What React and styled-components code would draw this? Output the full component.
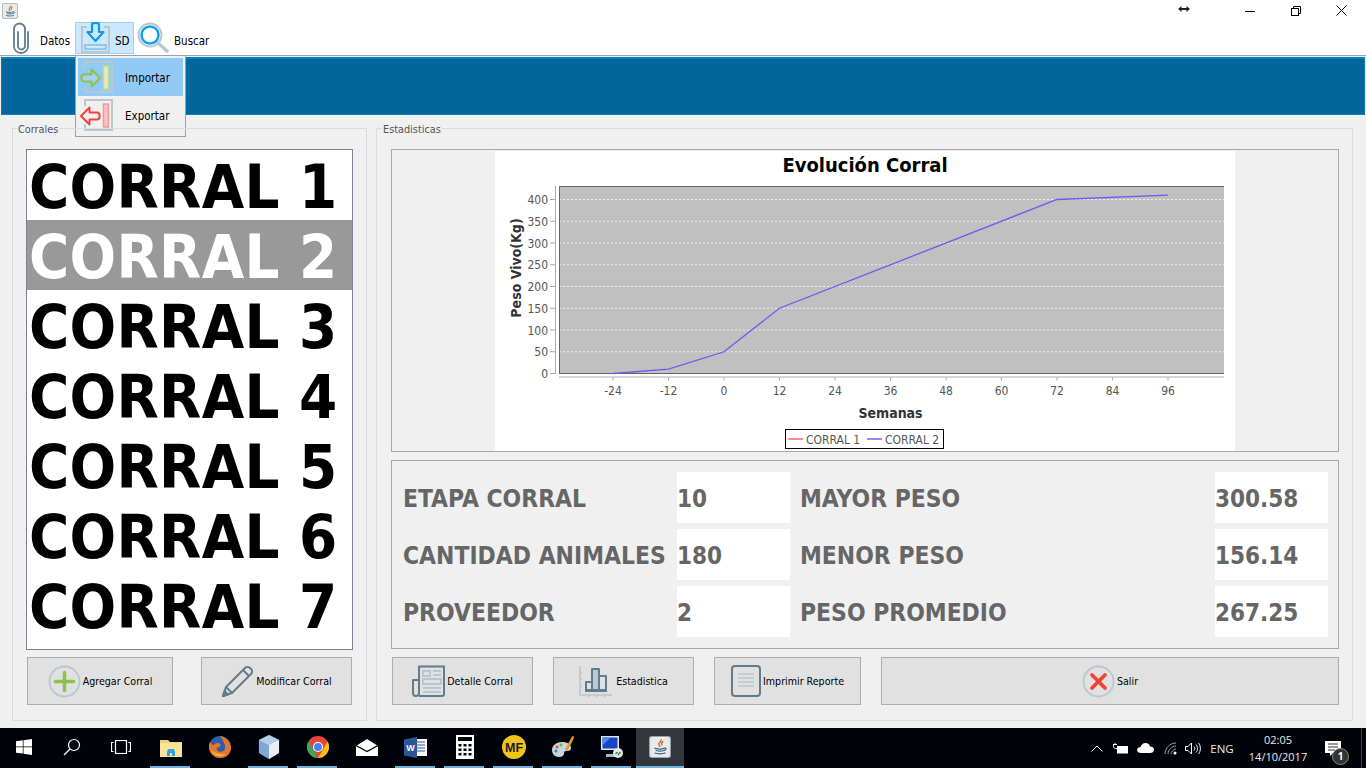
import React from 'react';
import styled, { createGlobalStyle } from 'styled-components';

const GlobalStyle = createGlobalStyle`
  html, body { margin: 0; padding: 0; overflow: hidden; }
  body { font-family: "DejaVu Sans Condensed", "DejaVu Sans", sans-serif; background: #f0f0f0; }
`;

const UI_FONT = '"DejaVu Sans Condensed", "DejaVu Sans", sans-serif';

const Page = styled.div`
  width: 1366px;
  height: 768px;
  display: flex;
  flex-direction: column;
  position: relative;
  overflow: hidden;
`;

const TitleBar = styled.div`
  height: 22px;
  background: #fff;
  display: flex;
  justify-content: space-between;
  padding: 0 2px;
  position: relative;
`;

const AppIcon = styled.div`
  padding-top: 3px;
`;

const WindowControls = styled.div`
  display: flex;
`;

const WindowButton = styled.div`
  width: 45.5px;
  height: 21px;
  display: flex;
  align-items: center;
  justify-content: center;
`;

const ResizeCursor = styled.svg`
  position: absolute;
  left: 1178px;
  top: 5px;
`;

const Toolbar = styled.div`
  height: 33px;
  background: #fff;
  border-bottom: 1px solid #a0a0a0;
  display: flex;
  align-items: stretch;
  padding-left: 9px;
  font-size: 11.5px;
  color: #000;
`;

const ToolItem = styled.div`
  display: flex;
  align-items: center;
  height: 32px;
  box-sizing: border-box;
  width: ${p => p.$w}px;
  margin-right: ${p => p.$mr || 0}px;
  gap: ${p => p.$gap || 0}px;
  padding-left: ${p => p.$pl || 0}px;
  border: 1px solid ${p => (p.$active ? '#99d1ff' : 'transparent')};
  background: ${p => (p.$active ? '#cce8ff' : 'transparent')};
`;

const ToolLabel = styled.span`
  margin-top: 6px;
`;

const Banner = styled.div`
  height: 59px;
  margin: 1px 1px 0;
  background: #00669c;
  border: 1px solid #0080bd;
  border-top-width: 2px;
  box-sizing: border-box;
`;

const Menu = styled.div`
  position: absolute;
  left: 75px;
  top: 55px;
  width: 111px;
  height: 82px;
  box-sizing: border-box;
  background: #f0f0f0;
  border: 1px solid #a0a0a0;
  padding: 2px;
  font-size: 11.5px;
  color: #000;
`;

const MenuRow = styled.div`
  height: 38px;
  display: flex;
  align-items: center;
  background: ${p => (p.$active ? '#91c9f7' : 'transparent')};
`;

const MenuIcon = styled.div`
  width: 47px;
  height: 100%;
  display: flex;
  align-items: center;
  padding-left: 1px;
  box-sizing: border-box;
`;

const MenuLabel = styled.span`
  margin-top: 2px;
`;

const Main = styled.div`
  flex: 1;
  background: #f0f0f0;
  display: flex;
  gap: 9px;
  padding: 13px 13px 7px 12px;
`;

const Group = styled.div`
  position: relative;
  box-sizing: border-box;
  width: ${p => p.$w}px;
  border: 1px solid #dcdcdc;
  padding: 20px 13px 15px ${p => p.$pl}px;
  display: flex;
  flex-direction: column;
  gap: ${p => p.$gap}px;
`;

const Legend = styled.span`
  position: absolute;
  top: -6px;
  left: ${p => p.$x}px;
  padding: 0 1px;
  background: #f0f0f0;
  font-size: 10.8px;
  line-height: 13px;
  color: #555;
`;

const CorralList = styled.div`
  height: 501px;
  box-sizing: border-box;
  background: #fff;
  border: 1px solid #7a8290;
  display: flex;
  flex-direction: column;
`;

const CorralItem = styled.div`
  height: 70px;
  flex: none;
  box-sizing: border-box;
  padding: 4px 0 0 2px;
  display: flex;
  align-items: center;
  font-size: 61px;
  font-weight: 700;
  letter-spacing: 0.3px;
  line-height: 66px;
  white-space: pre;
  color: ${p => (p.$selected ? '#fff' : '#000')};
  background: ${p => (p.$selected ? '#999' : 'transparent')};
`;

const ButtonRow = styled.div`
  display: flex;
  height: 48px;
  margin-left: ${p => p.$ml || 0}px;
  gap: ${p => p.$gap}px;
`;

const ActionButton = styled.div`
  box-sizing: border-box;
  width: ${p => (p.$w ? `${p.$w}px` : 'auto')};
  flex: ${p => (p.$grow ? 1 : 'none')};
  height: 48px;
  background: #e1e1e1;
  border: 1px solid #adadad;
  display: flex;
  align-items: center;
  justify-content: center;
  gap: ${p => p.$gap ?? 2}px;
  font-size: 10.6px;
  color: #000;
`;

const ChartPanel = styled.div`
  height: 303px;
  box-sizing: border-box;
  border: 1px solid #a8a8a8;
  display: flex;
  justify-content: center;
  align-items: center;
`;

const StatsPanel = styled.div`
  height: 189px;
  box-sizing: border-box;
  border: 1px solid #a8a8a8;
  padding: 11px 10px 11px 11px;
  display: grid;
  grid-template-columns: 274px 113px 425px 113px;
  grid-auto-rows: 51px;
  row-gap: 6px;
  font-size: 24.4px;
  font-weight: 700;
  color: #666;
`;

const StatLabel = styled.div`
  display: flex;
  align-items: center;
  white-space: nowrap;
  padding: 2px 0 0 ${p => p.$pl || 0}px;
`;

const StatValue = styled.div`
  background: #fff;
  display: flex;
  align-items: center;
  padding-top: 2px;
  font-size: 24px;
`;

const Taskbar = styled.div`
  height: 40px;
  background: #01030a;
  display: flex;
  align-items: center;
  color: #fff;
  font-family: "Open Sans", sans-serif;
`;

const TaskSlot = styled.div`
  width: ${p => p.$w || 49}px;
  height: 40px;
  flex: none;
  box-sizing: border-box;
  display: flex;
  align-items: center;
  justify-content: center;
  background: ${p => (p.$active ? '#33363a' : 'transparent')};
  border-bottom: 2px solid transparent;
  position: relative;
  &::after {
    content: '';
    display: ${p => (p.$running ? 'block' : 'none')};
    position: absolute;
    left: ${p => (p.$active ? 0 : 4)}px;
    right: ${p => (p.$active ? 0 : 5)}px;
    bottom: -2px;
    height: 2px;
    background: #6cb1e0;
  }
`;

const Tray = styled.div`
  margin-left: auto;
  display: flex;
  align-items: center;
  height: 40px;
`;

const TrayIcon = styled.div`
  width: ${p => p.$w}px;
  display: flex;
  justify-content: center;
  align-items: center;
`;

const Clock = styled.div`
  width: 72px;
  text-align: center;
  font-size: 11px;
  line-height: 17px;
  margin-left: 3px;
  color: #e8e8e8;
`;

const Lang = styled.div`
  font-size: 11.5px;
  width: 34px;
  text-align: center;
  color: #e8e8e8;
`;

const NotifyWrap = styled.div`
  width: 38px;
  height: 40px;
  margin-right: 9px;
  display: flex;
  align-items: center;
  justify-content: center;
  position: relative;
`;

const NotifyBadge = styled.span`
  position: absolute;
  left: 18px;
  top: 20px;
  width: 15px;
  height: 15px;
  border-radius: 50%;
  background: #333;
  border: 1px solid #888;
  font-size: 10px;
  font-weight: 700;
  line-height: 15px;
  text-align: center;
  color: #fff;
`;

const ShowDesktop = styled.div`
  width: 4px;
  height: 40px;
  border-left: 1px solid #3a3d42;
`;

/* ---- icons ---- */
const STEEL = '#5f7d8c';
const PALE = '#b8c8d0';

const JavaLogo = ({ size = 16 }) => (
  <svg width={size} height={size} viewBox="0 0 20 20">
    <rect x="0.5" y="0.5" width="19" height="19" rx="2" fill="#e8eaec" stroke="#9aa4ad" />
    <path d="M11 3c1 2-3 3-2 5 .4.8 1 1.300 1 2M13 5c-2 1-2 2-1 3.500" fill="none" stroke="#e2661a" strokeWidth="1.300" />
    <path d="M5 11c3 1 7 1 9 0M6 13c2 .8 6 .8 8 0M5 15.500c3 1 8 1 10-.2M14 11c2-.5 2 1.500 0 2" fill="none" stroke="#35648c" strokeWidth="1.100" />
  </svg>
);

const PaperClip = () => (
  <svg width="20" height="32" viewBox="1 0 20 32" fill="none" stroke={STEEL} strokeWidth="1.800" strokeLinecap="round">
    <path d="M8 10V24a3.500 3.500 0 0 0 7 0V7a5.500 5.500 0 0 0-11 0v17.500a7 6.500 0 0 0 14 0V10" />
  </svg>
);

const SdIcon = () => (
  <svg width="32" height="32" viewBox="0 0 32 32" fill="none">
    <path d="M8 5H3v25h27V5h-5" stroke={PALE} strokeWidth="2" />
    <rect x="6" y="23" width="21" height="4" fill="#cce8ff" stroke="#7fbde8" strokeWidth="1.500" />
    <path d="M13 2.500c0-2 7-2 7 0V10h4.500L16.500 19 8.500 10H13z" fill="#cce8ff" stroke="#0d9be8" strokeWidth="2.200" strokeLinejoin="round" />
  </svg>
);

const SearchIcon = () => (
  <svg width="32" height="32" viewBox="0 0 32 32" fill="none">
    <path d="M21 21l9 8" stroke={PALE} strokeWidth="3.500" strokeLinecap="round" />
    <circle cx="13" cy="13" r="11.500" stroke={PALE} strokeWidth="2" />
    <circle cx="13" cy="13" r="8.500" stroke="#10a0ee" strokeWidth="2.500" />
  </svg>
);

const TransferIcon = ({ out }) => (
  <svg width="36" height="34" viewBox="0 0 36 34" fill="none">
    <path d="M6 8V2h27v30H6v-6" stroke={PALE} strokeWidth="2" />
    <rect x="24.500" y="6" width="5" height="23" fill={out ? '#f7c4c4' : '#e3ecb8'} stroke={out ? '#ee9a9a' : '#c8da8e'} strokeWidth="1.500" />
    {out ? (
      <path d="M2 18l8.500-8.500v5H18c3.500 0 3.500 7 0 7h-7.500v5z" fill="#f0f0f0" stroke="#f44336" strokeWidth="2" strokeLinejoin="round" />
    ) : (
      <path d="M21 18l-8.500-8.500v5H5c-3.500 0-3.500 7 0 7h7.500v5z" fill="#a9d0f0" stroke="#8bc34a" strokeWidth="2" strokeLinejoin="round" />
    )}
  </svg>
);

const PlusIcon = () => (
  <svg width="33" height="33" viewBox="0 0 33 33" fill="none">
    <circle cx="16.500" cy="16.500" r="15" stroke="#b8c8d0" strokeWidth="1.800" />
    <path d="M16.500 7.500v18M7.500 16.500h18" stroke="#8bc34a" strokeWidth="3.500" strokeLinecap="round" />
  </svg>
);

const PencilIcon = () => (
  <svg width="33" height="33" viewBox="0 0 33 33" fill="none" stroke={STEEL} strokeWidth="2" strokeLinejoin="round">
    <path d="M2 31l3-9L24 3c1.500-1.500 3.500-1.500 5 0l1 1c1.500 1.500 1.500 3.500 0 5L11 28z" />
    <path d="M5 22l6 6M22 5l6 6" />
    <path d="M2 31l1.500-5 3.500 3.500z" fill={STEEL} />
  </svg>
);

const ExitIcon = () => (
  <svg width="33" height="33" viewBox="0 0 33 33" fill="none">
    <circle cx="16.500" cy="16.500" r="15" stroke="#b8c8d0" strokeWidth="1.800" />
    <path d="M10 10l13 13M23 10L10 23" stroke="#f44336" strokeWidth="3.800" strokeLinecap="round" />
  </svg>
);

const NewsIcon = () => (
  <svg width="33" height="33" viewBox="0 0 33 33" fill="none" stroke={STEEL} strokeWidth="2">
    <path d="M7 31h23c1.500 0 2-1 2-2V1.500H7V28c0 2-1 3-3 3s-3-1-3-3V15h6" strokeLinejoin="round" />
    <path d="M11 6h7v5h-7z M21 6h8M21 10h8" stroke={PALE} />
    <path d="M11 14h18v5H11zM11 23h18M11 27h18" stroke={PALE} />
  </svg>
);

const BarsIcon = () => (
  <svg width="33" height="33" viewBox="0 0 33 33" fill="none">
    <path d="M1 1v29h32M1 7H3M1 14H3M1 21H3M10 29v3M18 29v3M26 29v3" stroke={PALE} strokeWidth="1.600" />
    <rect x="14" y="5" width="5" height="19" fill="#bcc8ce" />
    <path d="M7 25v-8h6v8zM13 25V4h7v21zM20 25V11h7v14z M6 26h22" stroke={STEEL} strokeWidth="2" strokeLinejoin="round" />
  </svg>
);

const ReportIcon = () => (
  <svg width="30" height="32" viewBox="0 0 30 32" fill="none">
    <rect x="1" y="1" width="28" height="30" rx="3" stroke={STEEL} strokeWidth="2" />
    <path d="M7 9h16M7 13h16M7 17h16M7 21h16" stroke={PALE} strokeWidth="1.500" />
  </svg>
);

const WinLogo = () => (
  <svg width="16" height="16" viewBox="0 0 16 16" fill="#fff">
    <path d="M0 2.300l6.800-1v6.200H0zM7.500 1.200L16 0v7.500H7.500zM0 8.300h6.800v6.300L0 13.700zM7.500 8.300H16V16l-8.500-1.200z" />
  </svg>
);

const GlassIcon = () => (
  <svg width="18" height="18" viewBox="0 0 18 18" fill="none" stroke="#fff" strokeWidth="1.200">
    <circle cx="11" cy="7" r="5.500" />
    <path d="M7 11l-6 6" />
  </svg>
);

const TaskViewIcon = () => (
  <svg width="20" height="14" viewBox="0 0 20 14" fill="none" stroke="#fff" strokeWidth="1.200">
    <rect x="4.500" y="0.500" width="11" height="13" />
    <path d="M2.500 2.500H.5v9h2M17.500 2.500h2v9h-2" />
  </svg>
);

const FolderIcon = () => (
  <svg width="22" height="19" viewBox="0 0 22 19">
    <path d="M0 2h8l2 2h12v15H0z" fill="#f3d36f" />
    <path d="M0 5h22v14H0z" fill="#fbe49a" />
    <path d="M7 18v-4l1-3h6l1 3v4h-3v-3h-2v3z" fill="#2fa3da" />
  </svg>
);

const FirefoxIcon = () => (
  <svg width="24" height="24" viewBox="0 0 24 24">
    <circle cx="12" cy="12" r="11" fill="#2b5fa8" />
    <path d="M12 1c6 1 11 6 11 12 0 6-5 10-11 10C6 23 1 18 1 12c0-2 .6-4 1.500-5.500C3 9 4 10 6 10c1-2 3-2 5-2 2 1 2 3 0 4-2 0-3 1-2 3 2 3 7 2 8-1 1-4-2-9-5-13z" fill="#e8762a" />
    <path d="M3 15c2 6 10 8 15 4-5 1-10 0-15-4z" fill="#f6b73c" />
  </svg>
);

const CubeIcon = () => (
  <svg width="22" height="26" viewBox="0 0 22 26">
    <path d="M11 1l10 5v13l-10 6-10-6V6z" fill="#c7dbe8" stroke="#1d2a50" strokeWidth="1" />
    <path d="M11 11l10-5v13l-10 6z" fill="#e9eef0" />
    <path d="M11 11L1 6v13l10 6z" fill="#7ea9d6" />
    <path d="M11 1l10 5-10 5L1 6z" fill="#b6cee6" />
  </svg>
);

const ChromeIcon = () => (
  <svg width="22" height="22" viewBox="0 0 22 22">
    <circle cx="11" cy="11" r="11" fill="#e8453c" />
    <path d="M1.500 5.500L7 15l4 7c-6 0-11-5-11-11 0-2 .5-3.800 1.500-5.500z" fill="#3aa757" />
    <path d="M11 22l5-8.500L20.500 5.500H11l9.500 0C21.500 7 22 9 22 11c0 6-5 11-11 11z" fill="#fbc116" />
    <circle cx="11" cy="11" r="5" fill="#fff" />
    <circle cx="11" cy="11" r="3.900" fill="#4285f4" />
  </svg>
);

const MailIcon = () => (
  <svg width="22" height="17" viewBox="0 0 22 17">
    <path d="M0 7l11-7 11 7v10H0z" fill="#fff" />
    <path d="M0 6.500l11 6 11-6" fill="none" stroke="#01030a" strokeWidth="1.300" />
  </svg>
);

const WordIcon = () => (
  <svg width="23" height="21" viewBox="0 0 23 21">
    <rect x="9" y="2" width="14" height="17" fill="#fff" />
    <path d="M11 5h10M11 8h10M11 11h10M11 14h10" stroke="#2b5797" strokeWidth="1.200" />
    <path d="M0 2.500L13 0v21L0 18.500z" fill="#2b5797" />
    <text x="6.500" y="14" textAnchor="middle" fontFamily="Liberation Sans, sans-serif" fontSize="9" fontWeight="700" fill="#fff">W</text>
  </svg>
);

const CalcIcon = () => (
  <svg width="18" height="24" viewBox="0 0 18 24">
    <rect width="18" height="24" fill="#fff" />
    <rect x="2" y="2" width="14" height="4" fill="#01030a" />
    {[9, 13.500, 18].map(y => [2.500, 7.500, 12.500].map(x => (
      <rect key={`${x}-${y}`} x={x} y={y} width="3" height="2.500" fill="#01030a" />
    )))}
  </svg>
);

const MfIcon = () => (
  <svg width="24" height="24" viewBox="0 0 24 24">
    <circle cx="12" cy="12" r="12" fill="#f0c419" />
    <text x="12" y="16.500" textAnchor="middle" fontFamily="Liberation Sans, sans-serif" fontSize="12.500" fontWeight="700" fill="#1a1a1a">MF</text>
  </svg>
);

const PaletteIcon = () => (
  <svg width="24" height="24" viewBox="0 0 24 24">
    <path d="M1 15c0-5 5-8 10-8 5 0 9 2 9 6 0 3-3 3-5 3s-2 2-2 3-2 3-5 3c-4 0-7-3-7-7z" fill="#c9d5dc" />
    <circle cx="6" cy="12" r="1.500" fill="#e94b3c" />
    <circle cx="10" cy="10" r="1.500" fill="#6fb544" />
    <circle cx="5" cy="16" r="1.500" fill="#3b82c4" />
    <path d="M23 1l-2 .5-7 13 2.500 1.500 6-12z" fill="#e89a2e" />
  </svg>
);

const RemoteIcon = () => (
  <svg width="24" height="24" viewBox="0 0 24 24">
    <rect x="1" y="1" width="18" height="14" fill="#dfe6ee" />
    <rect x="2.500" y="2.500" width="15" height="11" fill="#1746c4" />
    <path d="M2.500 2.500l8 0-8 8z" fill="#4d8bf0" />
    <path d="M6 19h12v3H6z" fill="#aeb6bd" />
    <circle cx="18" cy="18" r="5" fill="#e4e9ec" />
    <path d="M15.500 19l2-2M18 20l2.500-3" stroke="#1c8a3b" strokeWidth="1.300" />
  </svg>
);

const BatteryIcon = () => (
  <svg width="16" height="11" viewBox="0 0 16 11" fill="none" stroke="#fff">
    <rect x="4.500" y="3.500" width="10" height="6.500" fill="#fff" />
    <path d="M.5 1.500v2c0 1 1 2 2 2h2M3 1.500h-3M2 1V0M4 1.500H3" strokeWidth="1" />
  </svg>
);

const CloudIcon = () => (
  <svg width="17" height="10" viewBox="0 0 17 10" fill="#fff">
    <path d="M4 10c-2 0-4-1-4-3s2-3 3.500-3C4 2 6 0 8.500 0s4 1.500 4.500 3.500c2 0 4 1 4 3.300S15 10 13 10z" />
  </svg>
);

const WifiIcon = () => (
  <svg width="13" height="13" viewBox="0 0 13 13" fill="none" stroke="#9aa0a6">
    <path d="M1 12C1 6 6 1 12 1M4 12c0-4 4-8 8-8M7 12c0-2 2.500-5 5-5" />
    <circle cx="11" cy="11" r="1.500" fill="#fff" stroke="none" />
  </svg>
);

const VolumeIcon = () => (
  <svg width="17" height="13" viewBox="0 0 17 13" fill="none" stroke="#fff">
    <path d="M.5 4.500h2.500L6.500 1v11L3 8.500H.5z" />
    <path d="M9 4.500c1 1 1 3 0 4M11 2.500c2 2 2 6 0 8M13.500 1c2.500 3 2.500 8 0 11" />
  </svg>
);

const ChatIcon = () => (
  <svg width="16" height="15" viewBox="0 0 16 15">
    <path d="M0 0h16v12h-8l-3 3v-3H0z" fill="#fff" />
    <path d="M3 3h10M3 6h10M3 9h7" stroke="#333" />
  </svg>
);

const CHART = {
  left: 559 - 495,
  right: 1224 - 495,
  top: 186 - 151,
  bottom: 373.5 - 151,
};

const yTicks = [0, 50, 100, 150, 200, 250, 300, 350, 400];
const xTicks = [-24, -12, 0, 12, 24, 36, 48, 60, 72, 84, 96];
const series = [[-24, 0], [-12, 10], [0, 50], [12, 150], [72, 400], [96, 410]];
const px = w => 229 + (w * 55.5) / 12;
const py = v => CHART.bottom - (v * 21.75) / 50;
const linePoints = series.map(([w, v]) => `${px(w)},${py(v)}`).join(' ');

const ChartSvg = styled.svg`
  display: block;
  background: #fff;
  font-family: ${UI_FONT};
`;

const EvolutionChart = () => (
  <ChartSvg width="740" height="300" viewBox="0 0 740 300">
    <text x="370" y="21" textAnchor="middle" fontSize="20" fontWeight="700" fill="#000">Evolución Corral</text>
    <rect x={CHART.left} y={CHART.top} width={CHART.right - CHART.left} height={CHART.bottom - CHART.top} fill="#c0c0c0" />
    {yTicks.map(v => (
      <g key={v}>
        {v > 0 && <line x1={CHART.left} x2={CHART.right} y1={py(v)} y2={py(v)} stroke="#eee" strokeDasharray="2 2" />}
        <line x1={CHART.left - 9} x2={CHART.left - 3} y1={py(v)} y2={py(v)} stroke="#aaa" />
        <text x={CHART.left - 11} y={py(v) + 4.500} textAnchor="end" fontSize="12" fill="#555">{v}</text>
      </g>
    ))}
    <path d={`M${CHART.left + 0.5} ${CHART.bottom}V${CHART.top + 0.5}H${CHART.right}`} fill="none" stroke="#666" />
    <line x1={CHART.left} x2={CHART.right} y1={CHART.bottom} y2={CHART.bottom} stroke="#666" />
    <line x1={CHART.left - 3.5} x2={CHART.left - 3.5} y1={CHART.top} y2={CHART.bottom} stroke="#aaa" />
    <line x1={CHART.left} x2={CHART.right} y1={CHART.bottom + 3.5} y2={CHART.bottom + 3.5} stroke="#aaa" />
    {xTicks.map(w => (
      <g key={w}>
        <line x1={px(w)} x2={px(w)} y1={CHART.bottom + 4} y2={CHART.bottom + 7} stroke="#aaa" />
        <text x={px(w)} y={CHART.bottom + 21} textAnchor="middle" fontSize="12" fill="#555">{w}</text>
      </g>
    ))}
    <polyline points={linePoints} fill="none" stroke="#7058f0" strokeWidth="1.300" />
    <text x="395.500" y="267" textAnchor="middle" fontSize="14" fontWeight="700" fill="#333">Semanas</text>
    <text transform="translate(25.500 117) rotate(-90)" textAnchor="middle" fontSize="14" fontWeight="700" fill="#333">Peso Vivo(Kg)</text>
    <rect x="290.500" y="278.500" width="158" height="19" fill="#fff" stroke="#000" />
    <line x1="293" x2="308" y1="288" y2="288" stroke="#ff6666" strokeWidth="1.500" />
    <text x="311" y="293" fontSize="12" fill="#555">CORRAL 1</text>
    <line x1="372" x2="387" y1="288" y2="288" stroke="#6666ff" strokeWidth="1.500" />
    <text x="390" y="293" fontSize="12" fill="#555">CORRAL 2</text>
  </ChartSvg>
);

const corrales = [1, 2, 3, 4, 5, 6, 7];
const statRows = [
  ['ETAPA CORRAL', '10', 'MAYOR PESO', '300.58'],
  ['CANTIDAD ANIMALES', '180', 'MENOR PESO', '156.14'],
  ['PROVEEDOR', '2', 'PESO PROMEDIO', '267.25'],
];

export default function App() {
  return (
    <Page>
      <GlobalStyle />
      <TitleBar>
        <AppIcon><JavaLogo /></AppIcon>
        <WindowControls>
          <WindowButton>
            <svg width="10" height="10" viewBox="0 0 10 10"><path d="M0 5.500h10" stroke="#000" /></svg>
          </WindowButton>
          <WindowButton>
            <svg width="10" height="10" viewBox="0 0 10 10" fill="none" stroke="#000"><rect x=".5" y="2.500" width="7" height="7" /><path d="M2.500 2.500v-2h7v7h-2" /></svg>
          </WindowButton>
          <WindowButton>
            <svg width="11" height="11" viewBox="0 0 11 11" stroke="#000"><path d="M.5.500l10 10M10.500.500l-10 10" /></svg>
          </WindowButton>
        </WindowControls>
        <ResizeCursor width="12" height="8" viewBox="0 0 12 8">
          <path d="M0 4l3.500-3v2h5V1L12 4 8.500 7V5h-5v2z" fill="#222" />
        </ResizeCursor>
      </TitleBar>
      <Toolbar>
        <ToolItem $w={66} $gap={9} $pl={1}><PaperClip /><ToolLabel>Datos</ToolLabel></ToolItem>
        <ToolItem $w={59} $active $gap={4} $pl={3} $mr={2}><SdIcon /><ToolLabel>SD</ToolLabel></ToolItem>
        <ToolItem $w={80} $gap={5}><SearchIcon /><ToolLabel>Buscar</ToolLabel></ToolItem>
      </Toolbar>
      <Banner />
      <Menu>
        <MenuRow $active>
          <MenuIcon><TransferIcon /></MenuIcon>
          <MenuLabel>Importar</MenuLabel>
        </MenuRow>
        <MenuRow>
          <MenuIcon><TransferIcon out /></MenuIcon>
          <MenuLabel>Exportar</MenuLabel>
        </MenuRow>
      </Menu>
      <Main>
        <Group $w={355} $gap={7} $pl={13}>
          <Legend $x={4}>Corrales</Legend>
          <CorralList>
            {corrales.map(n => (
              <CorralItem key={n} $selected={n === 2}>{`CORRAL ${n}`}</CorralItem>
            ))}
          </CorralList>
          <ButtonRow $gap={28} $ml={1}>
            <ActionButton $w={146}><PlusIcon />Agregar Corral</ActionButton>
            <ActionButton $w={151}><PencilIcon />Modificar Corral</ActionButton>
          </ButtonRow>
        </Group>
        <Group $w={977} $gap={8} $pl={14}>
          <Legend $x={5}>Estadisticas</Legend>
          <ChartPanel><EvolutionChart /></ChartPanel>
          <StatsPanel>
            {statRows.map(([a, b, c, d]) => (
              <React.Fragment key={a}>
                <StatLabel>{a}</StatLabel>
                <StatValue>{b}</StatValue>
                <StatLabel $pl={10}>{c}</StatLabel>
                <StatValue>{d}</StatValue>
              </React.Fragment>
            ))}
          </StatsPanel>
          <ButtonRow $gap={20} $ml={1}>
            <ActionButton $w={141}><NewsIcon />Detalle Corral</ActionButton>
            <ActionButton $w={141} $gap={4}><BarsIcon />Estadistica</ActionButton>
            <ActionButton $w={147}><ReportIcon />Imprimir Reporte</ActionButton>
            <ActionButton $grow><ExitIcon />Salir</ActionButton>
          </ButtonRow>
        </Group>
      </Main>
      <Taskbar>
        <TaskSlot $w={48}><WinLogo /></TaskSlot>
        <TaskSlot $w={48}><GlassIcon /></TaskSlot>
        <TaskSlot $w={50}><TaskViewIcon /></TaskSlot>
        <TaskSlot $running><FolderIcon /></TaskSlot>
        <TaskSlot><FirefoxIcon /></TaskSlot>
        <TaskSlot $running><CubeIcon /></TaskSlot>
        <TaskSlot $running><ChromeIcon /></TaskSlot>
        <TaskSlot><MailIcon /></TaskSlot>
        <TaskSlot $running><WordIcon /></TaskSlot>
        <TaskSlot $running><CalcIcon /></TaskSlot>
        <TaskSlot $running><MfIcon /></TaskSlot>
        <TaskSlot $running><PaletteIcon /></TaskSlot>
        <TaskSlot $running><RemoteIcon /></TaskSlot>
        <TaskSlot $w={48} $running $active><JavaLogo size={22} /></TaskSlot>
        <Tray>
          <TrayIcon $w={28}>
            <svg width="12" height="7" viewBox="0 0 12 7" fill="none" stroke="#fff"><path d="M.5 6.500L6 1l5.500 5.500" /></svg>
          </TrayIcon>
          <TrayIcon $w={20}><BatteryIcon /></TrayIcon>
          <TrayIcon $w={28}><CloudIcon /></TrayIcon>
          <TrayIcon $w={22}><WifiIcon /></TrayIcon>
          <TrayIcon $w={24}><VolumeIcon /></TrayIcon>
          <Lang>ENG</Lang>
          <Clock>02:05<br />14/10/2017</Clock>
          <NotifyWrap>
            <ChatIcon />
            <NotifyBadge>1</NotifyBadge>
          </NotifyWrap>
          <ShowDesktop />
        </Tray>
      </Taskbar>
    </Page>
  );
}
